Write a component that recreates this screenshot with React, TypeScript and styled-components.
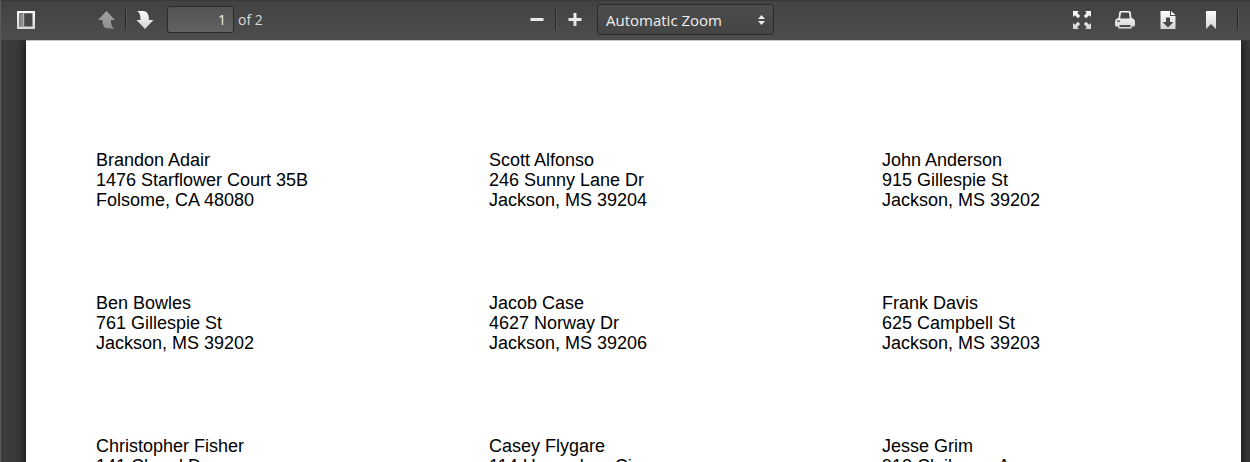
import React from "react";
import styled, { createGlobalStyle, css } from "styled-components";

const GlobalStyle = createGlobalStyle`
  * { box-sizing: border-box; }
  html, body, #root { height: 100%; }
  body { margin: 0; overflow: hidden; background: #3b3b3b; }
`;

const Viewer = styled.div`
  display: flex;
  flex-direction: column;
  height: 100vh;
  font-family: "Open Sans", "Noto Sans", sans-serif;
  border-left: 1px solid #5c5c5c;
`;

const Toolbar = styled.header`
  flex: none;
  display: grid;
  grid-template-columns: 1fr auto 1fr;
  align-items: center;
  height: 40px;
  padding: 0 9px 2px 9px;
  background: linear-gradient(#424242, #4d4d4d);
  border-top: 1px solid #383838;
`;

const Group = styled.div<{ $align?: "center" | "end" }>`
  display: flex;
  align-items: center;
  justify-content: ${(p) => (p.$align === "end" ? "flex-end" : "flex-start")};
  padding-left: ${(p) => (p.$align === "center" ? 44 : 0)}px;
`;

const IconButton = styled.button<{ $gap?: number }>`
  display: grid;
  place-items: center;
  width: 32px;
  height: 28px;
  margin: 0 ${(p) => p.$gap ?? 0}px 0 0;
  padding: 0;
  border: 0;
  background: none;
  &:disabled { opacity: 0.5; }
  svg { display: block; }
`;

const Separator = styled.span`
  width: 2px;
  height: 21px;
  margin: 0 2px;
  background: #262626;
  border-right: 1px solid #575757;
`;

const field = css`
  color: #f0f0f0;
  border: 1px solid #2b2b2b;
  border-radius: 3px;
  font-family: inherit;
`;

const PageInput = styled.input`
  ${field}
  width: 67px;
  height: 27px;
  margin-left: 6px;
  padding: 0 7px;
  font-size: 14px;
  text-align: right;
  background: linear-gradient(#525252, #626262);
`;

const PageLabel = styled.label`
  display: flex;
  align-items: center;
  gap: 4px;
  color: #d9d9d9;
  font-size: 14px;
`;

const SelectBox = styled.div`
  display: grid;
  align-items: center;
  margin-left: 6px;
  > * { grid-area: 1 / 1; }
  svg { justify-self: end; margin-right: 9px; pointer-events: none; }
`;

const ZoomSelect = styled.select`
  ${field}
  appearance: none;
  width: 177px;
  height: 31px;
  padding: 0 28px 0 8px;
  font-size: 15px;
  background: linear-gradient(#4d4d4d, #444);
`;

const Canvas = styled.main`
  flex: 1;
  min-height: 0;
  overflow: hidden;
  padding: 0 9px 0 25px;
  background: #3b3b3b;
`;

const Page = styled.article`
  display: grid;
  grid-template-columns: 393fr 393fr 359fr;
  row-gap: 83px;
  min-height: 100%;
  padding: 109px 0 0 70px;
  background: #fff;
  border-top: 1px solid #c4c4c4;
  box-shadow: 0 0 10px 1px #111;
`;

const Address = styled.address`
  color: #000;
  font: normal 18px/20px "Liberation Sans", Arial, sans-serif;
  white-space: nowrap;
`;

const Line = styled.div``;

const labels = [
  ["Brandon Adair", "1476 Starflower Court 35B", "Folsome, CA 48080"],
  ["Scott Alfonso", "246 Sunny Lane Dr", "Jackson, MS 39204"],
  ["John Anderson", "915 Gillespie St", "Jackson, MS 39202"],
  ["Ben Bowles", "761 Gillespie St", "Jackson, MS 39202"],
  ["Jacob Case", "4627 Norway Dr", "Jackson, MS 39206"],
  ["Frank Davis", "625 Campbell St", "Jackson, MS 39203"],
  ["Christopher Fisher", "141 Cheryl Dr"],
  ["Casey Flygare", "114 Horseshoe Cir"],
  ["Jesse Grim", "913 Claiborne Ave"],
];

const Icon = ({ children }: { children: React.ReactNode }) => {
  const id = React.useId();
  return (
    <svg width="20" height="20" viewBox="0 0 20 20" fill={`url(#${id})`} aria-hidden="true">
      <defs>
        <linearGradient id={id} gradientUnits="userSpaceOnUse" x1="0" y1="0" x2="0" y2="20">
          <stop offset="0" stopColor="#fff" />
          <stop offset="1" stopColor="#d2d2d2" />
        </linearGradient>
      </defs>
      {children}
    </svg>
  );
};

const SidebarIcon = () => (
  <Icon>
    <path fillRule="evenodd" d="M1 1h18v18H1zM3.300 3.300v13.200h13.200V3.300z" />
    <path d="M4 4h3v12H4z" fill="#8c8c8c" />
    <path d="M7 3h1.200v14H7z" fill="#b5b5b5" />
  </Icon>
);
const UpIcon = () => (
  <Icon><path d="M9.500 1L18 10h-4c0 4 .5 6.500 3.500 8.500h-6C7 18.500 5.500 15 5.500 10H1z" /></Icon>
);
const DownIcon = () => (
  <Icon><path d="M2 1h6c4.500 0 6 4 6 9h4.500L10 19 1.500 10h4C5.500 5.500 5 3 2 1z" /></Icon>
);
const MinusIcon = () => <Icon><path d="M3.500 8h13v3h-13z" /></Icon>;
const PlusIcon = () => <Icon><path d="M8.500 3h3v5h5v3h-5v5h-3v-5h-5V8h5z" /></Icon>;
const FullIcon = () => (
  <Icon>
    <path d="M1 1h6L5.200 2.800 8.200 6 6 8.200 2.800 5.200 1 7zM19 1v6l-1.800-1.800L14 8.200 11.800 6l3-3.200L13 1zM1 19v-6l1.800 1.800L6 11.800 8.200 14l-3 3.200L7 19zM19 19h-6l1.800-1.800-3-3.200 2.200-2.200 3.200 3L19 13z" />
  </Icon>
);
const PrintIcon = () => (
  <Icon>
    <path
      fillRule="evenodd"
      d="M6 1h8q1.500 0 1.800 1.500L16.500 8H17q3 1 3 4v3q0 1.500-1.500 1.500H17l-.5 2h-13l-.5-2H1.500Q0 16.500 0 15v-3q0-3 3-4h.5l.7-5.500Q4.500 1 6 1zM6 2.500L5.200 8.500h9.600L14 2.500zM2 10.500v1.200h3v-1.200zM4.500 15v2h11v-2z"
    />
  </Icon>
);
const DownloadIcon = () => (
  <Icon>
    <path fillRule="evenodd" d="M2.500 1H12v5h5.500v13h-15zM8 7.500V12H4.500l5.500 5.500 5.500-5.500H12V7.500z" />
    <path d="M13 1l4.500 4H13z" />
  </Icon>
);
const BookmarkIcon = () => <Icon><path d="M5 1h10v18l-5-5-5 5z" /></Icon>;

export default function App() {
  return (
    <Viewer>
      <GlobalStyle />
      <Toolbar>
        <Group>
          <IconButton aria-label="Toggle sidebar" $gap={49}><SidebarIcon /></IconButton>
          <IconButton aria-label="Previous page" disabled><UpIcon /></IconButton>
          <Separator />
          <IconButton aria-label="Next page"><DownIcon /></IconButton>
          <PageLabel><PageInput aria-label="Page" defaultValue="1" />of 2</PageLabel>
        </Group>
        <Group $align="center">
          <IconButton aria-label="Zoom out"><MinusIcon /></IconButton>
          <Separator />
          <IconButton aria-label="Zoom in"><PlusIcon /></IconButton>
          <SelectBox>
            <ZoomSelect aria-label="Zoom" defaultValue="auto">
              <option value="auto">Automatic Zoom</option>
            </ZoomSelect>
            <svg width="7" height="10" viewBox="0 0 7 10" fill="#eee" aria-hidden="true">
              <path d="M3.500 0L7 4H0zM0 6h7l-3.500 4z" />
            </svg>
          </SelectBox>
        </Group>
        <Group $align="end">
          <IconButton aria-label="Presentation mode" $gap={11}><FullIcon /></IconButton>
          <IconButton aria-label="Print" $gap={11}><PrintIcon /></IconButton>
          <IconButton aria-label="Download" $gap={11}><DownloadIcon /></IconButton>
          <IconButton aria-label="Bookmark" $gap={8}><BookmarkIcon /></IconButton>
          <Separator />
        </Group>
      </Toolbar>
      <Canvas>
        <Page>
          {labels.map((lines) => (
            <Address key={lines[0]}>
              {lines.map((line) => <Line key={line}>{line}</Line>)}
            </Address>
          ))}
        </Page>
      </Canvas>
    </Viewer>
  );
}
